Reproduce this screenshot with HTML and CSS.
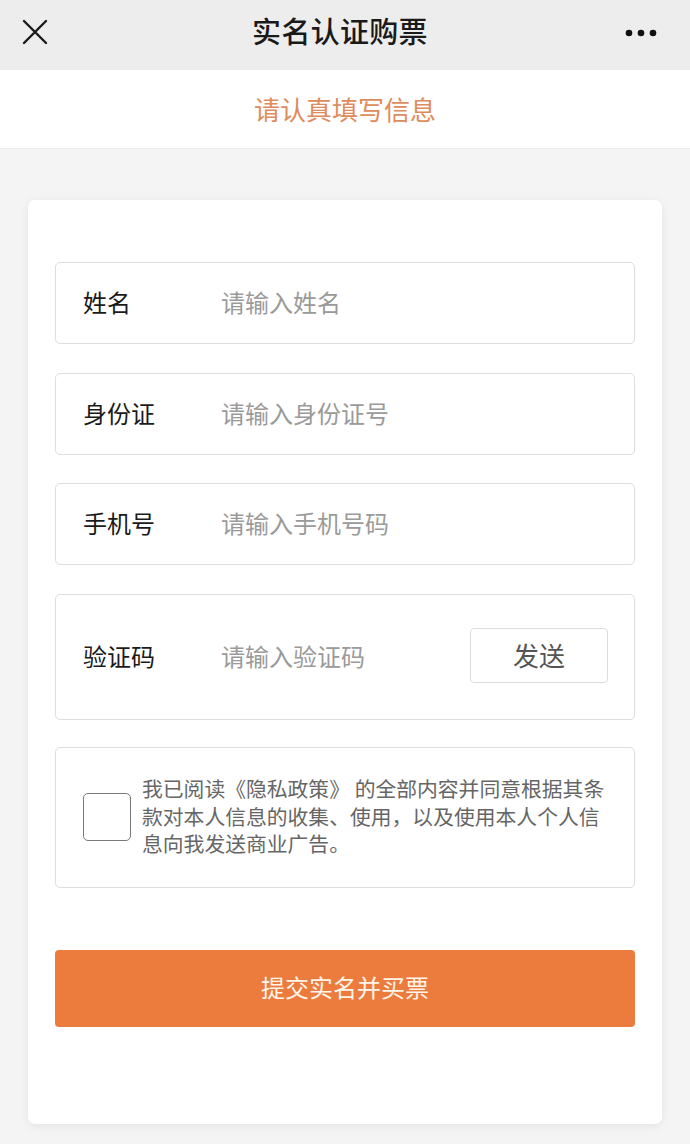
FILE: index.html
```html
<!DOCTYPE html>
<html lang="zh-CN">
<head>
<meta charset="utf-8">
<title>实名认证购票</title>
<link rel="stylesheet" href="styles.css">
</head>
<body>
<header class="navbar">
  <span class="nav-close">
    <svg width="30" height="30" viewBox="0 0 30 30"><path d="M4 4 L26 26 M26 4 L4 26" stroke="#1a1a1a" stroke-width="2.4" fill="none" stroke-linecap="round"/></svg>
  </span>
  <h1 class="nav-title">实名认证购票</h1>
  <span class="nav-more">
    <svg width="36" height="10" viewBox="0 0 36 10"><circle cx="5" cy="5" r="3.3" fill="#111"/><circle cx="17" cy="5" r="3.3" fill="#111"/><circle cx="29" cy="5" r="3.3" fill="#111"/></svg>
  </span>
</header>
<div class="subhead">请认真填写信息</div>
<main class="page">
  <section class="card">
    <div class="field">
      <span class="label">姓名</span>
      <span class="placeholder">请输入姓名</span>
    </div>
    <div class="field">
      <span class="label">身份证</span>
      <span class="placeholder">请输入身份证号</span>
    </div>
    <div class="field">
      <span class="label">手机号</span>
      <span class="placeholder">请输入手机号码</span>
    </div>
    <div class="field field-code">
      <span class="label">验证码</span>
      <span class="placeholder grow">请输入验证码</span>
      <span class="send-btn">发送</span>
    </div>
    <div class="field field-agree">
      <span class="checkbox"></span>
      <p class="agree-text">我已阅读《隐私政策》 的全部内容并同意根据其条款对本人信息的收集、使用，以及使用本人个人信息向我发送商业广告。</p>
    </div>
    <div class="submit">提交实名并买票</div>
  </section>
</main>
</body>
</html>
```

FILE: styles.css
```css
* { box-sizing: border-box; }
html, body { margin: 0; padding: 0; }
body {
  width: 690px;
  min-height: 1144px;
  background: #f4f4f4;
  font-family: "Noto Sans CJK SC", "Noto Sans", sans-serif;
  color: #1a1a1a;
}
.navbar {
  height: 70px;
  background: #ededed;
  display: grid;
  grid-template-columns: 1fr auto 1fr;
  align-items: center;
  padding: 0 30px 6px 20px;
}
.nav-close { width: 30px; height: 30px; display: flex; justify-self: start; }
.nav-more { width: 36px; height: 10px; display: flex; justify-self: end; margin-top: 2px; }
.nav-title {
  margin: 0 0 4px;
  font-size: 29px;
  font-weight: 500;
  color: #1a1a1a;
  letter-spacing: 0.3px;
}
.subhead {
  height: 79px;
  background: #fff;
  border-bottom: 1px solid #ececec;
  display: flex;
  align-items: center;
  justify-content: center;
  padding-bottom: 2px;
  font-size: 26px;
  color: #de8c5c;
}
.page { padding: 51px 28px 20px; }
.card {
  background: #fff;
  border-radius: 7px;
  box-shadow: 0 2px 10px rgba(0,0,0,0.07);
  padding: 62px 27px 97px;
  display: flex;
  flex-direction: column;
  gap: 28.5px;
}
.field {
  height: 82px;
  border: 1px solid #dedede;
  border-radius: 5px;
  display: flex;
  align-items: center;
  padding: 0 26px 3px 27px;
}
.label {
  width: 138px;
  flex: none;
  font-size: 24px;
  color: #1a1a1a;
}
.placeholder {
  font-size: 24px;
  color: #9a9a9a;
}
.grow { flex: 1; }
.field-code { height: 126px; }
.send-btn {
  width: 138px;
  height: 55px;
  margin-top: 1px;
  border: 1px solid #dcdcdc;
  border-radius: 4px;
  display: flex;
  align-items: center;
  justify-content: center;
  padding-bottom: 3px;
  font-size: 26px;
  color: #555;
}
.field-agree {
  height: 141px;
  margin-top: -1px;
  padding-right: 24px;
  padding-bottom: 2px;
}
.checkbox {
  width: 48px;
  height: 48px;
  flex: none;
  border: 1.5px solid #7a7a7a;
  border-radius: 5px;
  margin-right: 11px;
  margin-top: 1px;
}
.agree-text {
  margin: 0;
  font-size: 20.8px;
  line-height: 27.5px;
  color: #666;
}
.submit {
  margin-top: 33px;
  height: 77px;
  border-radius: 4px;
  background: #ec7b3e;
  color: #fff5ea;
  font-size: 24px;
  padding-bottom: 3px;
  display: flex;
  align-items: center;
  justify-content: center;
}
```
